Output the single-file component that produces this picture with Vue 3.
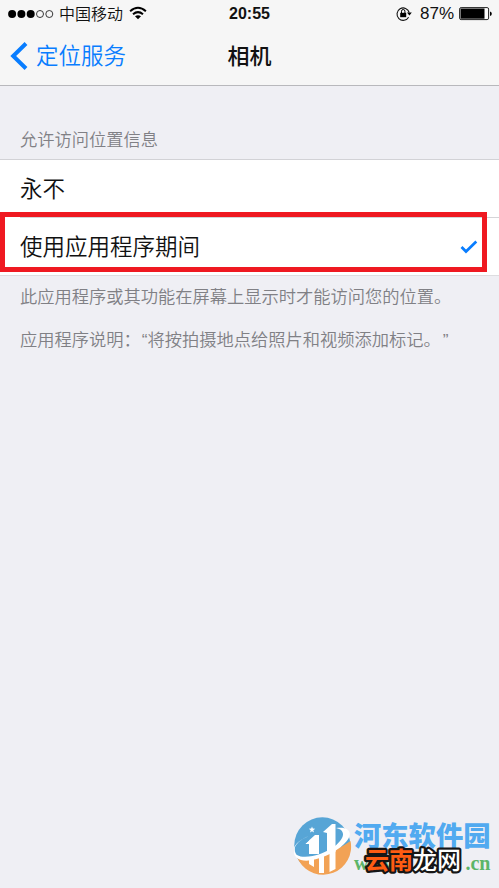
<template>
  <main class="phone">
    <header class="top">
      <div class="status">
        <div class="carrier">
          <svg class="dots" width="47" height="12" viewBox="0 0 47 12">
            <circle v-for="n in 5" :key="n" :cx="n * 9.3 - 5.2" cy="6" :r="n < 4 ? 4 : 3.5" :fill="n < 4 ? '#000' : 'none'" :stroke="n < 4 ? 'none' : '#222'" stroke-width="0.9" />
          </svg>
          <span class="net">中国移动</span>
          <svg class="wifi" width="18" height="14" viewBox="0 0 18 14">
            <g fill="none" stroke="#000" stroke-width="2">
              <path d="M1.1 5.2Q9-1.7 16.9 5.2" />
              <path d="M4 8.2Q9 4 14 8.2" />
            </g>
            <path d="M6 10.3Q9 8 12 10.3L9 13.2Z" />
          </svg>
        </div>
        <div class="clock">20:55</div>
        <div class="power">
          <svg width="16" height="16" viewBox="0 0 16 16">
            <path d="M12.6 11.2A6.2 6.2 0 1 1 13.2 6.5" fill="none" stroke="#111" stroke-width="1.1" />
            <path d="M11 6.6h4.8L13.4 9.4z" />
            <rect x="4.2" y="6.8" width="6" height="4.4" />
            <path d="M5.5 7V5.2a1.7 1.7 0 0 1 3.4 0V7" fill="none" stroke="#000" />
          </svg>
          <span class="percent">87%</span>
          <svg width="33" height="14" viewBox="0 0 33 14">
            <rect x=".6" y=".6" width="29" height="12" rx="1.5" fill="#fff" stroke="#222" />
            <rect x="1.5" y="1.5" width="24" height="10.2" />
            <path d="M31 4.5q1.8.3 1.8 2.2T31 9z" />
          </svg>
        </div>
      </div>
      <nav class="nav">
        <a class="back">
          <svg width="18" height="28" viewBox="0 0 18 28"><path d="M16 1.5L3.2 14L16 26.5" fill="none" stroke="#087dff" stroke-width="4" /></svg>
          <span>定位服务</span>
        </a>
        <h1>相机</h1>
      </nav>
    </header>
    <h2>允许访问位置信息</h2>
    <section class="group">
      <div class="row">永不</div>
      <div class="row chosen">
        <span>使用应用程序期间</span>
        <svg width="18" height="14" viewBox="0 0 18 14"><path d="M1.5 7L6 11.5L16.3 1.5" fill="none" stroke="#087dff" stroke-width="2.7" /></svg>
      </div>
      <div class="highlight"></div>
    </section>
    <footer class="notes">
      <p>此应用程序或其功能在屏幕上显示时才能访问您的位置。</p>
      <p>应用程序说明：<span class="quote">“</span>将按拍摄地点给照片和视频添加标记。<span class="quote closing">”</span></p>
    </footer>
    <div class="brand">
      <svg class="emblem" width="58" height="58" viewBox="0 0 58 58">
        <circle cx="28.3" cy="28.3" r="28" fill="#57a5d6" />
        <path d="M3 40Q18 44 33 37T56.5 24A28 28 0 0 1 5 44Z" fill="#f2a255" />
        <path d="M11 27L21 18H25V37H15V27ZM29 15L38 7H41.5V35L33 37V16Z" fill="#fff" />
        <path d="M15 41H20V50L15 47ZM25 39H30V56H25ZM35.5 36L41.5 33V52L35.5 55Z" fill="#fff" />
        <path d="M15 19C2 24-3 33 3 38C11 43 31 37 41 29C51 21 52 13 42 11C57 9 60 18 50 27C39 38 18 46 7 43C-4 39-4 26 15 19Z" fill="#fff" />
        <path d="M14 22C8 25 4 30 6 33C8 35.5 12 35 15 34V27H11L15 23.5Z" fill="#57a5d6" />
        <path d="M18 9.5l.8 2.1 2.4.1-1.9 1.5.7 2.3-2-1.3-2 1.3.7-2.3-1.9-1.5 2.4-.1z" fill="#fff" />
      </svg>
      <div class="words">
        <div class="site">河东软件园</div>
        <div class="url"><span>www.</span><span>.cn</span></div>
      </div>
      <svg class="stamp" width="106" height="40" viewBox="0 0 106 40">
        <text x="3" y="29" class="stamp-text"><tspan class="hot">云南</tspan><tspan class="cool">龙网</tspan></text>
      </svg>
    </div>
  </main>
</template>

<script setup>
</script>

<style>
body { background: #efeff4; }
</style>

<style scoped>
.phone { position: relative; width: 499px; height: 888px; overflow: hidden; background: #efeff4; color: #111; font-family: "Noto Sans CJK SC", sans-serif; font-weight: 350; text-spacing-trim: space-all; }
.top { box-sizing: border-box; height: 86px; background: #f6f6f6; border-bottom: 1px solid #b8b8bc; }
.status { display: grid; grid-template-columns: 1fr auto 1fr; height: 28px; align-items: center; }
.carrier { display: flex; align-items: center; padding-left: 8px; }
.net { margin-left: 4px; font-size: 16px; line-height: 26px; padding-bottom: 2px; }
.wifi { margin-left: 6px; margin-top: -2px; }
.clock { font: 700 16px/28px "Liberation Sans", sans-serif; }
.power { display: flex; align-items: center; justify-content: flex-end; padding-right: 7px; }
.percent { margin: 0 5px 0 8px; font: 400 17px/28px "Liberation Sans", sans-serif; }
.nav { display: grid; grid-template-columns: 1fr auto 1fr; height: 56px; align-items: center; }
.back { display: flex; align-items: center; padding-left: 10px; gap: 8px; color: #087dff; font-size: 22.5px; line-height: 53px; }
.back span { padding-bottom: 3px; }
h1 { margin: 0; font-size: 22px; line-height: 53px; padding-bottom: 3px; font-weight: 500; }
h2 { margin: 0; height: 73px; box-sizing: border-box; padding: 40px 0 0 20px; font-size: 17.25px; line-height: 26px; font-weight: 350; color: #808085; }
.group { position: relative; border-top: 1px solid #d2d2d6; border-bottom: 1px solid #dddde0; background: #fff; }
.row { height: 57px; padding-left: 20px; font-size: 22.5px; line-height: 54px; }
.chosen { display: flex; align-items: center; justify-content: space-between; margin-left: 20px; padding: 0 21px 0 0; border-top: 1px solid #d5d5d8; }
.chosen span { padding-bottom: 3px; }
.highlight { position: absolute; left: 0; top: 52px; width: 487px; height: 60px; box-sizing: border-box; border: 5px solid #ef1921; }
.notes { padding: 6px 0 0 20px; color: #808085; font-size: 17.25px; line-height: 28px; }
.notes p { margin: 0 0 15px; white-space: nowrap; }
.quote { font-family: "Liberation Sans", sans-serif; margin-left: 1px; }
.closing { margin-left: 2px; }
.brand { position: absolute; left: 294px; top: 817px; display: flex; }
.words { margin-left: 2px; }
.site { font: 900 27.3px/35px "Noto Sans CJK SC", sans-serif; color: #51aaf0; }
.url { display: flex; justify-content: space-between; font: 700 20px/22px "Liberation Serif", serif; color: #5cb568; }
.stamp { position: absolute; left: 68px; top: 23px; }
.stamp-text { font: 500 24px "Noto Sans CJK SC", sans-serif; stroke: #161616; stroke-width: 4.5px; stroke-linejoin: round; paint-order: stroke; }
.hot { fill: #ff5c12; font-weight: 700; }
.cool { fill: #fff; }
</style>
